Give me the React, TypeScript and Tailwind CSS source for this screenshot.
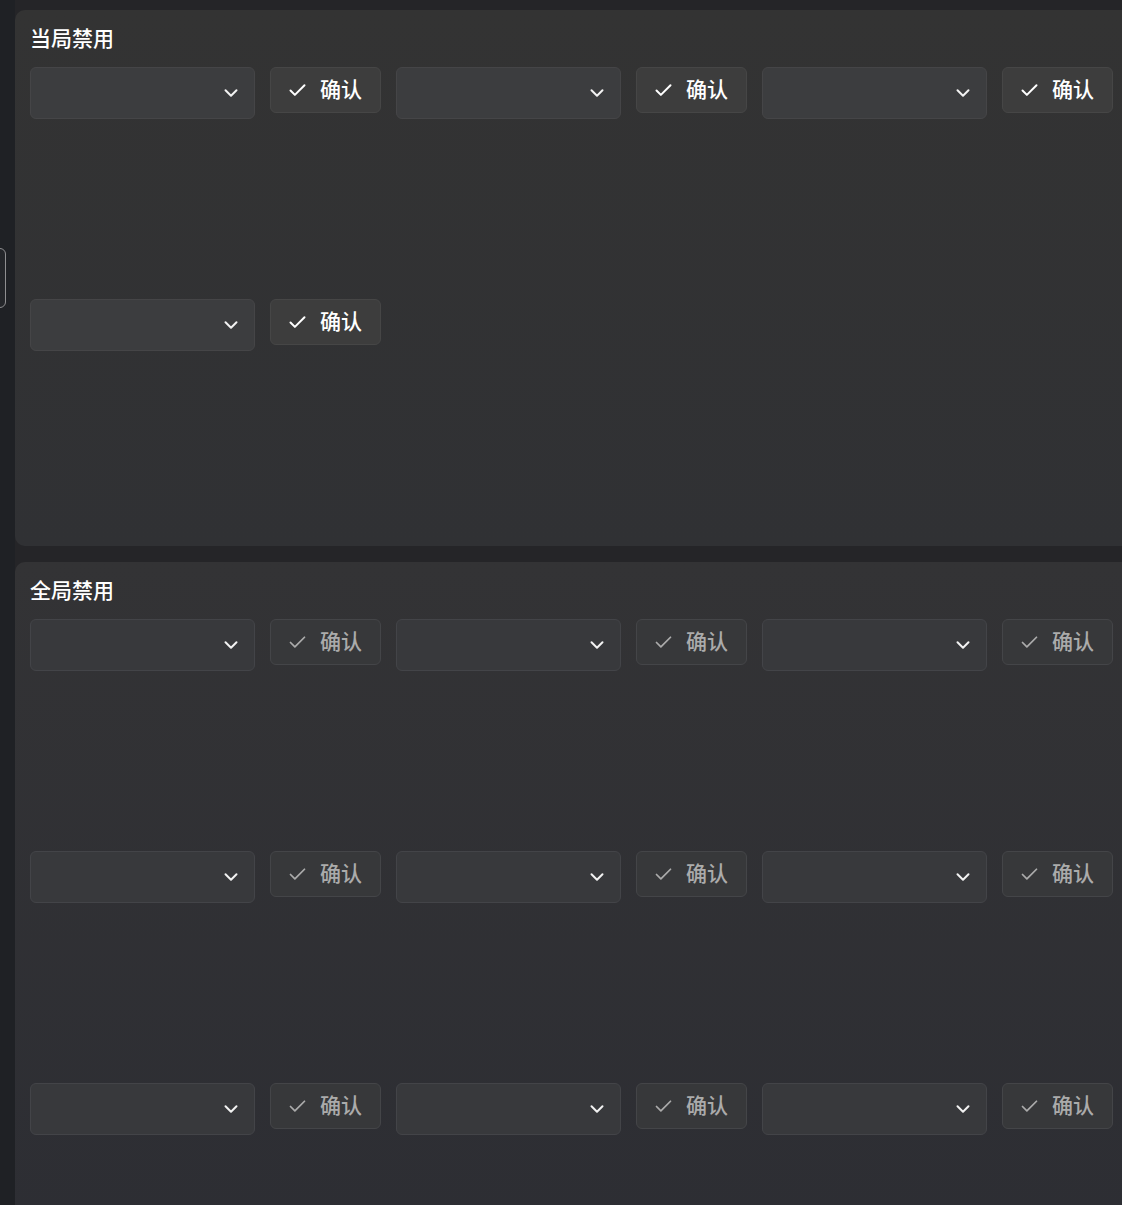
import { Check, ChevronDown } from "lucide-react";

const cjk = { fontFamily: '"Noto Sans CJK SC", "Noto Sans", sans-serif' };

function BanItem({ disabled }: { disabled?: boolean }) {
  return (
    <div className="flex h-[232px] items-start gap-[15px]">
      <div
        className={
          disabled
            ? "flex h-[52px] w-[225px] items-center justify-end rounded-[6px] border border-[#434448] bg-[#38393c] pr-[12px]"
            : "flex h-[52px] w-[225px] items-center justify-end rounded-[6px] border border-[#454547] bg-[#3c3d3f] pr-[12px]"
        }
      >
        <ChevronDown size={22} strokeWidth={2.2} className="text-[#f2f2f2]" />
      </div>

      <button
        className={
          disabled
            ? "flex h-[46px] w-[111px] items-center gap-[12px] rounded-[6px] border border-[#444548] bg-[#37383a] pl-[16px] text-[#ababab]"
            : "flex h-[46px] w-[111px] items-center gap-[12px] rounded-[6px] border border-[#464646] bg-[#3d3d3d] pl-[16px] text-white"
        }
      >
        <Check size={21} strokeWidth={disabled ? 2 : 2.3} />
        <span className="-mt-[3px] text-[21px] font-medium leading-none" style={cjk}>
          确认
        </span>
      </button>
    </div>
  );
}

function BanCard({
  title,
  count,
  disabled,
  tone,
}: {
  title: string;
  count: number;
  disabled?: boolean;
  tone: string;
}) {
  return (
    <section className={tone}>
      <h2
        className="-mt-[2px] mb-[16px] text-[21px] font-medium leading-[28px] text-white"
        style={cjk}
      >
        {title}
      </h2>

      <div className="flex flex-wrap gap-x-[15px]">
        {Array.from({ length: count }).map((_, i) => (
          <BanItem key={i} disabled={disabled} />
        ))}
      </div>
    </section>
  );
}

export default function App() {
  return (
    <main className="flex h-screen overflow-hidden bg-[#1f2125]">
      <div className="relative w-[15px] shrink-0">
        <div className="absolute -left-[20px] top-[248px] h-[60px] w-[26px] rounded-[6px] border border-[#8e8e90] bg-[#24262a]" />
      </div>

      <div className="flex min-w-0 flex-1 flex-col gap-4 bg-[#252528] pt-[10px]">
        <BanCard
          title="当局禁用"
          count={4}
          tone="w-[1200px] shrink-0 rounded-l-[10px] bg-linear-to-b from-[#333333] to-[#303134] p-[15px]"
        />

        <BanCard
          title="全局禁用"
          count={9}
          disabled
          tone="w-[1200px] shrink-0 rounded-l-[10px] bg-linear-to-b from-[#333335] to-[#2c2d33] p-[15px]"
        />
      </div>
    </main>
  );
}
